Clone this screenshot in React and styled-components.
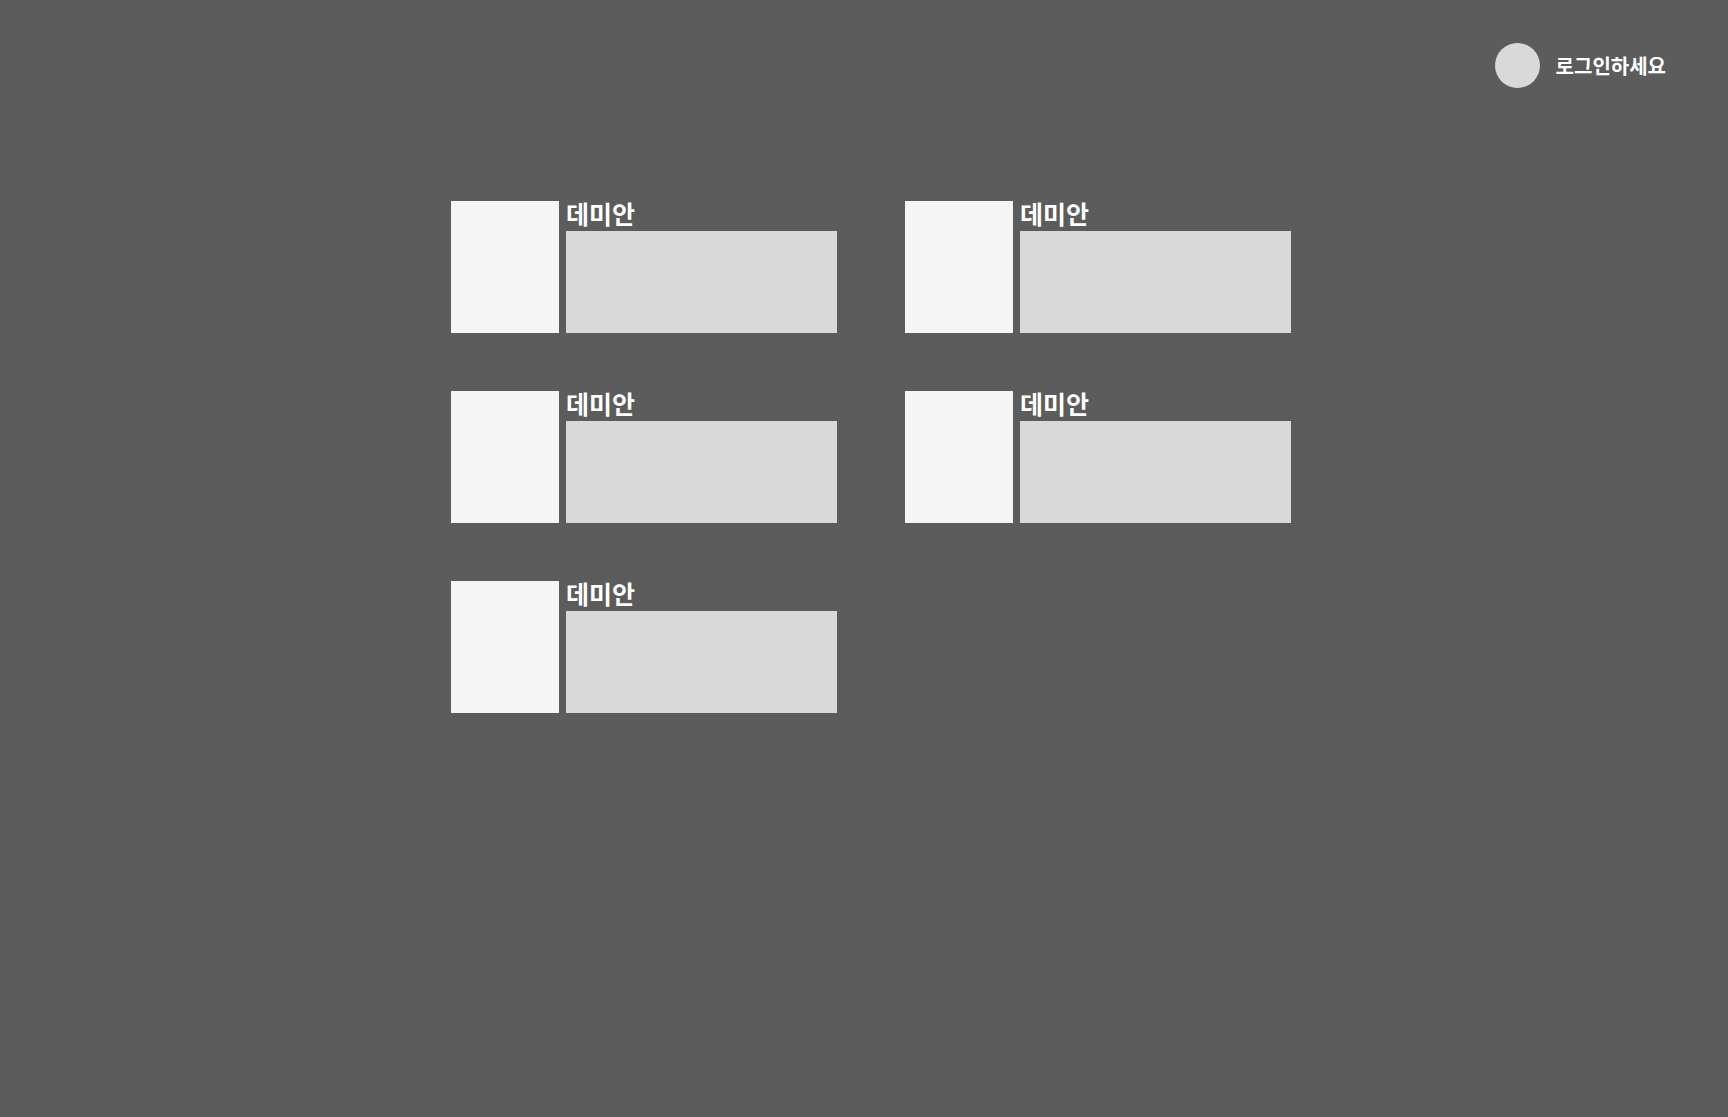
import React from "react";
import styled, { createGlobalStyle } from "styled-components";

const GlobalStyle = createGlobalStyle`
  *, *::before, *::after {
    box-sizing: border-box;
  }

  body {
    margin: 0;
    background: #5c5c5c;
    color: #ffffff;
    font-family: "Noto Sans CJK KR", "Noto Sans", sans-serif;
  }
`;

const Page = styled.div`
  min-height: 100vh;
`;

const Header = styled.header`
  display: flex;
  justify-content: flex-end;
  padding: 43px 62px 0;
`;

const LoginButton = styled.button`
  display: flex;
  align-items: center;
  gap: 16px;
  padding: 0;
  border: 0;
  background: none;
  color: inherit;
  font-family: inherit;
  font-size: 20px;
  font-weight: 700;
  line-height: 28px;
  cursor: pointer;
`;

const Avatar = styled.span`
  width: 45px;
  height: 45px;
  border-radius: 50%;
  background: #d9d9d9;
`;

const Main = styled.main`
  display: flex;
  justify-content: center;
  padding: 113px 0 58px 14px;
`;

const BookGrid = styled.ul`
  display: grid;
  grid-template-columns: repeat(2, auto);
  gap: 58px 68px;
  margin: 0;
  padding: 0;
  list-style: none;
`;

const BookCard = styled.li`
  display: grid;
  grid-template-columns: 108px 271px;
  column-gap: 7px;
`;

const Cover = styled.div`
  background: #f5f5f5;
`;

const Title = styled.h2`
  margin: 0;
  padding-bottom: 6px;
  font-size: 25px;
  font-weight: 700;
  line-height: 24px;
`;

const Description = styled.div`
  height: 102px;
  background: #d9d9d9;
`;

const books = [
  { id: 1, title: "데미안" },
  { id: 2, title: "데미안" },
  { id: 3, title: "데미안" },
  { id: 4, title: "데미안" },
  { id: 5, title: "데미안" },
];

export default function App() {
  return (
    <Page lang="ko">
      <GlobalStyle />
      <Header>
        <LoginButton type="button">
          <Avatar />
          로그인하세요
        </LoginButton>
      </Header>
      <Main>
        <BookGrid>
          {books.map((book) => (
            <BookCard key={book.id}>
              <Cover />
              <div>
                <Title>{book.title}</Title>
                <Description />
              </div>
            </BookCard>
          ))}
        </BookGrid>
      </Main>
    </Page>
  );
}
